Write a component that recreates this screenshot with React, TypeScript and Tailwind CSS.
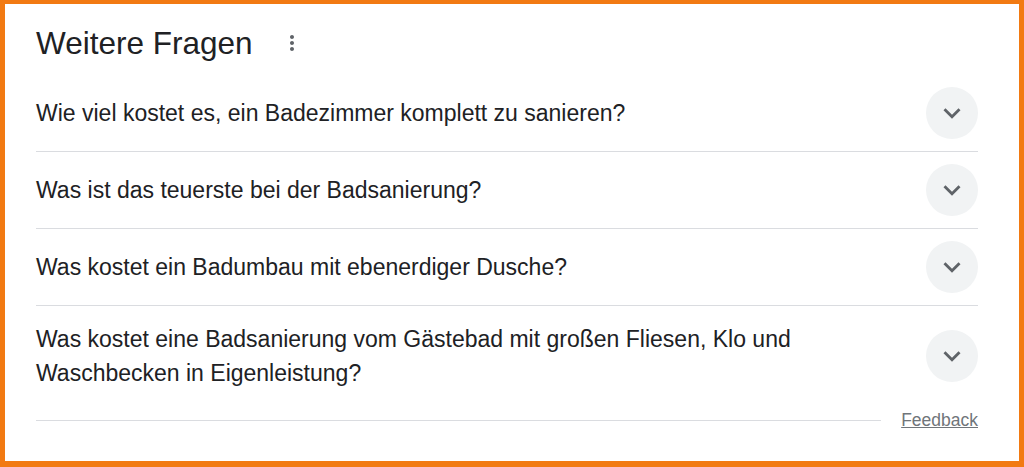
const questions = [
  'Wie viel kostet es, ein Badezimmer komplett zu sanieren?',
  'Was ist das teuerste bei der Badsanierung?',
  'Was kostet ein Badumbau mit ebenerdiger Dusche?',
]

const lastQuestion =
  'Was kostet eine Badsanierung vom Gästebad mit großen Fliesen, Klo und Waschbecken in Eigenleistung?'

function ExpandButton() {
  return (
    <div className="flex h-[52px] w-[52px] shrink-0 items-center justify-center rounded-full bg-[#f1f3f4]">
      <svg viewBox="0 0 24 24" className="h-[34px] w-[34px]" fill="#5f6368">
        <path d="M16.59 8.59 12 13.17 7.41 8.59 6 10l6 6 6-6z" />
      </svg>
    </div>
  )
}

export default function App() {
  return (
    <div
      className="h-[467px] w-[1024px] border-t-4 border-r-[5px] border-b-[6px] border-l-[5px] border-[#f27a12] bg-white pt-[19px] pr-[41px] pl-[31px] text-[#202124]"
      style={{ fontFamily: '"Liberation Sans", Arial, sans-serif' }}
    >
      <div className="flex h-[40px] items-center">
        <h2 className="text-[31.5px] leading-[40px]">Weitere Fragen</h2>
        <svg viewBox="0 0 24 24" className="ml-[27px] h-[24px] w-[24px]" fill="#5f6368">
          <path d="M12 8c1.1 0 2-.9 2-2s-.9-2-2-2-2 .9-2 2 .9 2 2 2zm0 2c-1.1 0-2 .9-2 2s.9 2 2 2 2-.9 2-2-.9-2-2-2zm0 6c-1.1 0-2 .9-2 2s.9 2 2 2 2-.9 2-2-.9-2-2-2z" />
        </svg>
      </div>

      <div className="mt-[12px]">
        {questions.map((q) => (
          <div key={q} className="flex h-[77px] items-center border-b border-[#dadce0]">
            <div className="flex-1 pr-[24px] text-[23px] leading-[34px]">{q}</div>
            <ExpandButton />
          </div>
        ))}
        <div className="flex items-center pt-[16px] pb-[18px]">
          <div className="flex-1 pr-[24px] text-[23px] leading-[34px]">{lastQuestion}</div>
          <ExpandButton />
        </div>
      </div>

      <div className="flex items-center">
        <div className="h-px flex-1 bg-[#dadce0]" />
        <a className="ml-[20px] text-[17.5px] leading-[24px] text-[#70757a] underline">Feedback</a>
      </div>
    </div>
  )
}
